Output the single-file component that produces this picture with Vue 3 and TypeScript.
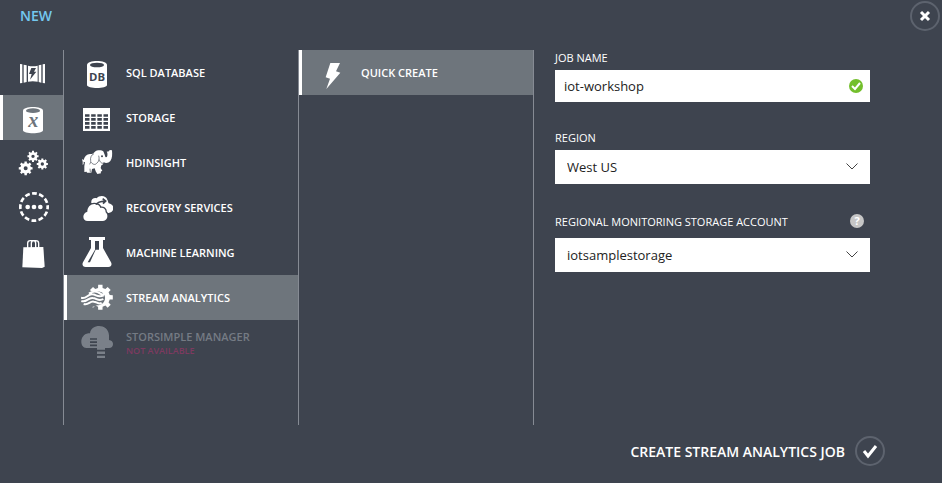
<script setup lang="ts">
import { ref } from 'vue'

interface Service {
  id: string
  label: string
  note?: string
}

const categories = [
  { id: 'compute', label: 'Compute' },
  { id: 'data', label: 'Data services' },
  { id: 'app', label: 'App services' },
  { id: 'network', label: 'Network services' },
  { id: 'store', label: 'Store' },
]

const services: Service[] = [
  { id: 'sql', label: 'SQL DATABASE' },
  { id: 'storage', label: 'STORAGE' },
  { id: 'hdinsight', label: 'HDINSIGHT' },
  { id: 'recovery', label: 'RECOVERY SERVICES' },
  { id: 'ml', label: 'MACHINE LEARNING' },
  { id: 'stream', label: 'STREAM ANALYTICS' },
  { id: 'storsimple', label: 'STORSIMPLE MANAGER', note: 'NOT AVAILABLE' },
]

const category = ref('data')
const service = ref('stream')
const jobName = ref('iot-workshop')
const region = ref('West US')
const account = ref('iotsamplestorage')

// Closed outline of a toothed wheel, with an optional round hole.
function gear(cx: number, cy: number, outer: number, inner: number, teeth: number, hole = 0): string {
  const step = (Math.PI * 2) / teeth
  const pts: string[] = []
  const at = (r: number, a: number) => `${(cx + r * Math.cos(a)).toFixed(1)} ${(cy + r * Math.sin(a)).toFixed(1)}`
  for (let i = 0; i < teeth; i++) {
    const a = i * step - Math.PI / 2
    pts.push(at(inner, a - step * 0.3), at(outer, a - step * 0.22), at(outer, a + step * 0.22), at(inner, a + step * 0.3))
  }
  let d = `M${pts.join('L')}Z`
  if (hole) d += `M${cx - hole} ${cy}a${hole} ${hole} 0 1 0 ${hole * 2} 0a${hole} ${hole} 0 1 0 ${-hole * 2} 0Z`
  return d
}

const gears = [gear(48, 31, 17, 13, 8, 5), gear(76, 54, 17, 13, 8, 5), gear(26, 67, 21, 16, 8, 6)].join('')
const streamGear = gear(58, 49, 38, 29, 8)
</script>

<template>
  <main class="panel">
    <header class="top">
      <h1 class="title">NEW</h1>
      <button class="round" type="button" aria-label="Close">
        <svg viewBox="0 0 30 30" aria-hidden="true"><path class="cross" d="M11 11l8 8M19 11l-8 8" /></svg>
      </button>
    </header>

    <div class="columns">
      <nav class="rail" aria-label="Categories">
        <button
          v-for="c in categories"
          :key="c.id"
          type="button"
          class="item"
          :class="{ selected: category === c.id }"
          :aria-label="c.label"
          @click="category = c.id"
        >
          <svg class="icon" viewBox="0 0 96 99" aria-hidden="true">
            <template v-if="c.id === 'compute'">
              <path d="M9 24l7 1v56l-7 1zM20 26l9 2v50l-9 2zM33 29q14 3 29 0v48q-15-3-29 0zM65 28l8-2v54l-8-2zM77 25l7-1v58l-7-1z" />
              <path class="cut" d="M43 36h14l-6 11h7L39 71l5-17h-8z" />
            </template>
            <template v-else-if="c.id === 'data'">
              <path d="M18 29c0-15 60-15 60 0v59c0 12-60 12-60 0z" />
              <ellipse class="cut" cx="48" cy="29" rx="21" ry="7" />
              <text class="glyph-x cut" x="49" y="79" text-anchor="middle">x</text>
            </template>
            <path v-else-if="c.id === 'app'" fill-rule="evenodd" :d="gears" />
            <template v-else-if="c.id === 'network'">
              <circle class="dashes" cx="51" cy="48" r="41" />
              <circle cx="32" cy="48" r="7" /><circle cx="51" cy="48" r="7" /><circle cx="70" cy="48" r="7" />
            </template>
            <template v-else>
              <path d="M19 34l60-1 4 59-8 4-59-2z" />
              <path class="handle" d="M32 38V22q0-8 8-8h8q8 0 8 8v16M43 38V22q0-8 8-8h5q9 0 9 8v16" />
            </template>
          </svg>
        </button>
      </nav>

      <nav class="list" aria-label="Services">
        <button
          v-for="s in services"
          :key="s.id"
          type="button"
          class="item"
          :class="{ selected: service === s.id, off: s.note }"
          :disabled="!!s.note"
          @click="service = s.id"
        >
          <svg class="icon" viewBox="0 0 96 99" aria-hidden="true">
            <template v-if="s.id === 'sql'">
              <path d="M18 27c0-16 60-16 60 0v60c0 12-60 12-60 0z" />
              <ellipse class="cut" cx="48" cy="27" rx="21" ry="7" />
              <text class="glyph-db cut" x="48" y="76" text-anchor="middle">DB</text>
            </template>
            <template v-else-if="s.id === 'storage'">
              <path d="M6 21h81v69H6z" />
              <path class="cells" d="M12 43.500h69M12 55h69M12 67h69M12 79h69" />
            </template>
            <template v-else-if="s.id === 'hdinsight'">
              <path d="M3 39l5 3c2-10 9-17 19-18 5 0 8 0 11-3 5-7 11-10 18-8 7-1 12 2 13 8 3 5 3 13 6 13 4 0 5-6 4-14l-2-3 7-1 2-4 7 1c1 13 1 25-5 32-5 6-13 7-20 4-1 5-3 8-7 9l-2 8 5 8-5 3 1 5-11 2-5-8-3-9-8 2-2 11H18l-1-3-7 1V60l2-11-4-2v7l-3 3 0-10z" />
              <path class="detail" d="M39 23c-8 3-12 13-10 21 1 5-2 8-3 11M30 48c4 7 12 10 17 4 7-5 9-14 6-23M55 41c2 8 8 13 15 10M27 68l1 11" />
              <circle class="cut" cx="63" cy="31" r="3" />
            </template>
            <template v-else-if="s.id === 'recovery'">
              <path d="M31 36c-2-10 7-17 16-14 8-10 28-9 32 4 3 4 2 8 4 11 14 3 18 15 11 23-3 5-9 6-16 6z" />
              <path class="ring" d="M20 90C3 90 3 65 19 62c0-16 14-26 26-22 7 1 12 6 13 11 9-2 16 3 16 13 10 9 5 26-9 26z" />
              <path class="arrow" d="M45 41c5-8 13-10 27-11M65 23l9 7-8 8" />
            </template>
            <template v-else-if="s.id === 'ml'">
              <path d="M24 3h48v9h-6v24l24 43c4 7 0 14-8 14H14c-8 0-12-7-8-14l24-43V12h-6z" />
              <path class="cut" d="M42 15h12v26H44L27 79h-7l22-38z" />
            </template>
            <template v-else-if="s.id === 'stream'">
              <path :d="streamGear" />
              <path class="cut" d="M16 34c16-6 54-8 56 14 2 14-10 25-23 25L16 84z" />
              <path class="waves" d="M0 50c16 6 20-12 34-10 12 0 16 12 34 3M1 60c16 6 20-11 34-9 12 0 17 12 32 3M8 69c14 5 18-9 30-7 10 0 13 9 24 4M24 38c12-9 26-6 34 0 4 3 8 3 12 1" />
            </template>
            <template v-else>
              <path d="M16 66C-5 66-5 26 22 22h5C31-8 82-8 84 28v14c17 1 15 24 0 24H72v30H48V66z" />
              <path class="stripes" d="M27 39h21M27 48.500h21M27 58h21M48 74h24M48 86.500h24" />
            </template>
          </svg>
          <span class="text">
            {{ s.label }}
            <small v-if="s.note" class="note">{{ s.note }}</small>
          </span>
        </button>
      </nav>

      <nav class="list" aria-label="Create options">
        <button type="button" class="item selected">
          <svg class="icon" viewBox="0 0 96 99" aria-hidden="true">
            <path d="M43 21h29L60 46l13 4L31 99l11-31-13-4z" />
          </svg>
          <span class="text">QUICK CREATE</span>
        </button>
      </nav>

      <form id="job" class="form" @submit.prevent>
        <div class="field">
          <label for="job-name">JOB NAME</label>
          <div class="control">
            <input id="job-name" v-model="jobName" type="text" />
            <svg class="valid" viewBox="0 0 14 14" aria-hidden="true">
              <circle cx="7" cy="7" r="7" /><path d="M3 7l3 3 5-6" />
            </svg>
          </div>
        </div>
        <div class="field">
          <label for="region">REGION</label>
          <div class="control">
            <select id="region" v-model="region"><option>West US</option></select>
            <svg class="chevron" viewBox="0 0 12 7" aria-hidden="true"><path d="M.5.500L6 6 11.500.500" /></svg>
          </div>
        </div>
        <div class="field">
          <div class="label-row">
            <label for="account">REGIONAL MONITORING STORAGE ACCOUNT</label>
            <button class="help" type="button">?</button>
          </div>
          <div class="control">
            <select id="account" v-model="account"><option>iotsamplestorage</option></select>
            <svg class="chevron" viewBox="0 0 12 7" aria-hidden="true"><path d="M.5.500L6 6 11.500.500" /></svg>
          </div>
        </div>
      </form>
    </div>

    <footer class="bottom">
      <button class="submit" type="submit" form="job">
        CREATE STREAM ANALYTICS JOB
        <span class="round">
          <svg viewBox="0 0 30 30" aria-hidden="true"><path class="tick" d="M9 15l4 5 8-10" /></svg>
        </span>
      </button>
    </footer>
  </main>
</template>

<style>
body {
  background: #3e444f;
}
</style>

<style scoped>
.panel {
  --bg: #3e444f;
  --hover: #6e757c;
  --line: #868b94;
  display: flex;
  flex-direction: column;
  min-height: 100vh;
  background: var(--bg);
  color: #fff;
  font-family: "Open Sans", "Noto Sans", sans-serif;
  font-size: 11px;
}
.panel * {
  box-sizing: border-box;
}
button {
  margin: 0;
  padding: 0;
  border: 0;
  background: none;
  color: inherit;
  font: inherit;
}
.top {
  display: flex;
  justify-content: space-between;
  align-items: flex-start;
  height: 50px;
  padding: 1px 2px 0 20px;
}
.title {
  margin: 0;
  color: #74c8ef;
  font-size: 14px;
  line-height: 30px;
  font-weight: 600;
}
.round {
  display: block;
  width: 30px;
  height: 30px;
  border: 2px solid #5d636e;
  border-radius: 50%;
}
.round svg {
  display: block;
  width: 30px;
  height: 30px;
  margin: -2px;
}
.cross,
.tick {
  fill: none;
  stroke: #fff;
  stroke-width: 3;
}
.columns {
  display: grid;
  grid-template-columns: 64px 235px 235px 1fr;
  min-height: 375px;
}
.rail,
.list {
  border-right: 1px solid var(--line);
}
.item {
  display: flex;
  align-items: center;
  gap: 13px;
  width: 100%;
  height: 45px;
  padding-left: 14px;
  border-left: 3px solid transparent;
  text-align: left;
  --under: var(--bg);
}
.item.selected {
  border-left-color: #fff;
  background: var(--hover);
  --under: var(--hover);
}
.icon {
  flex: none;
  width: 32px;
  height: 33px;
  fill: #fff;
}
.icon .cut {
  fill: var(--under);
}
.glyph-x {
  font: italic bold 60px "Liberation Serif", serif;
}
.glyph-db {
  font: bold 34px "Open Sans", sans-serif;
}
.dashes {
  fill: none;
  stroke: #fff;
  stroke-width: 8;
  stroke-dasharray: 14.500 6.970;
  stroke-dashoffset: 7.250;
}
.handle {
  fill: none;
  stroke: #fff;
  stroke-width: 4;
}
.cells {
  fill: none;
  stroke: var(--under);
  stroke-width: 8;
  stroke-dasharray: 13.500 5;
}
.detail {
  fill: none;
  stroke: var(--under);
  stroke-width: 2;
}
.ring {
  stroke: var(--under);
  stroke-width: 8;
  paint-order: stroke;
}
.arrow {
  fill: none;
  stroke: var(--under);
  stroke-width: 5;
}
.waves {
  fill: none;
  stroke: #fff;
  stroke-width: 6;
}
.stripes {
  fill: none;
  stroke: var(--under);
  stroke-width: 5;
}
.text {
  font-weight: 600;
  line-height: 15px;
}
.off {
  color: #757b84;
}
.off .icon {
  fill: #7a8089;
}
.note {
  display: block;
  color: #7d3a60;
  font-size: 9px;
  line-height: 13px;
  font-weight: 600;
}
.form {
  display: flex;
  flex-direction: column;
  gap: 28px;
  padding: 0 72px 0 21px;
}
.field label {
  display: block;
  padding-bottom: 4px;
  line-height: 16px;
}
.label-row {
  display: flex;
  justify-content: space-between;
  align-items: flex-start;
  padding: 2px 6px 4px 0;
}
.control {
  position: relative;
}
input,
select {
  display: block;
  width: 100%;
  height: 34px;
  margin: 0;
  padding: 0 40px 0 12px;
  border: 0;
  border-radius: 0;
  background: #fff;
  color: #222;
  font: 13px "Open Sans", "Noto Sans", sans-serif;
  appearance: none;
}
input {
  height: 32px;
  padding-left: 9px;
}
.valid,
.chevron {
  position: absolute;
  top: 9px;
  right: 7px;
  width: 14px;
  height: 14px;
  fill: #73bf2c;
}
.valid path {
  fill: none;
  stroke: #fff;
  stroke-width: 2;
}
.chevron {
  top: 13px;
  right: 12px;
  width: 12px;
  height: 7px;
  fill: none;
  stroke: #444;
  pointer-events: none;
}
.help {
  width: 14px;
  height: 14px;
  border-radius: 50%;
  background: #c6c6c6;
  color: #fff;
  font-size: 11px;
  line-height: 14px;
  font-weight: 700;
}
.bottom {
  display: flex;
  justify-content: flex-end;
  padding: 11px 57px 17px;
}
.submit {
  display: flex;
  align-items: center;
  gap: 10px;
  font-size: 14px;
  font-weight: 600;
}
</style>
